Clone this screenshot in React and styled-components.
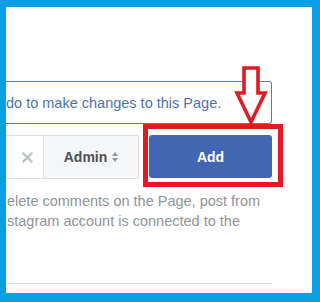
import React from "react";
import styled, { createGlobalStyle } from "styled-components";

const GlobalStyle = createGlobalStyle`
  html, body {
    margin: 0;
    padding: 0;
  }
  body {
    font-family: "Liberation Sans", Arial, sans-serif;
  }
`;

const App = () => {
  return (
    <Frame>
      <GlobalStyle />
      <Panel>
        <Content>
          <NoteBox>
            <NoteText>do to make changes to this Page.</NoteText>
          </NoteBox>

          <ControlRow>
            <ClearBox>
              <svg width="11" height="11" viewBox="0 0 11 11">
                <path
                  d="M1.5 1.5 L9.5 9.5 M9.5 1.5 L1.5 9.5"
                  stroke="#bec3c9"
                  strokeWidth="2.4"
                  strokeLinecap="square"
                />
              </svg>
            </ClearBox>
            <RoleSelect>
              Admin
              <svg width="6" height="10" viewBox="0 0 6 10">
                <path d="M3 0 L6 4 L0 4 Z M0 6 L6 6 L3 10 Z" fill="#90949c" />
              </svg>
            </RoleSelect>
            <AddButton>Add</AddButton>
          </ControlRow>

          <HelpText>
            <Line>elete comments on the Page, post from</Line>
            <Line>stagram account is connected to the</Line>
          </HelpText>

          <Divider />
        </Content>

        <Highlight />
        <Arrow width="36" height="62" viewBox="0 0 36 62">
          <polygon
            points="10,4 24,4 24,29 31,29 17,58 3,29 10,29"
            fill="#fff"
            stroke="#e01b24"
            strokeWidth="3.6"
          />
        </Arrow>
      </Panel>
    </Frame>
  );
};

export default App;

const Frame = styled.div`
  width: 320px;
  height: 302px;
  box-sizing: border-box;
  padding: 7px 8px 9px 6px;
  background: #0a9fe2;
`;

const Panel = styled.div`
  position: relative;
  height: 100%;
  background: #fff;
  overflow: hidden;
`;

const Content = styled.div`
  display: flex;
  flex-direction: column;
  padding: 74px 40px 0 0;
`;

const NoteBox = styled.div`
  height: 43px;
  box-sizing: border-box;
  display: flex;
  align-items: center;
  border: 1px solid #5a7db5;
  border-left: none;
  border-radius: 0 3px 3px 0;
  overflow: hidden;
`;

const NoteText = styled.span`
  font-size: 14.5px;
  color: #4e72b3;
  white-space: nowrap;
`;

const ControlRow = styled.div`
  display: flex;
  gap: 10px;
  height: 44px;
  margin-top: 11px;
`;

const ClearBox = styled.div`
  width: 37px;
  box-sizing: border-box;
  display: flex;
  align-items: center;
  justify-content: center;
  padding-left: 6px;
  border-top: 1px solid #dddfe2;
  border-bottom: 1px solid #dddfe2;
  background: #fff;
  margin-right: -10px;
`;

const RoleSelect = styled.div`
  width: 96px;
  box-sizing: border-box;
  display: flex;
  align-items: center;
  justify-content: center;
  gap: 5px;
  border: 1px solid #dddfe2;
  border-radius: 0 2px 2px 0;
  background: #f5f6f7;
  font-size: 14px;
  font-weight: bold;
  color: #4b4f56;
`;

const AddButton = styled.button`
  flex: 1;
  height: 43px;
  border: none;
  border-radius: 3px;
  background: #4267b2;
  color: #fff;
  font-family: "Liberation Sans", Arial, sans-serif;
  font-size: 14px;
  font-weight: bold;
  padding: 0;
`;

const HelpText = styled.div`
  margin-top: 12px;
  font-size: 14.5px;
  line-height: 20px;
  color: #90949c;
`;

const Line = styled.div`
  white-space: nowrap;
  padding-left: 1px;
`;

const Divider = styled.div`
  margin-top: 52px;
  height: 1px;
  background: #dddfe2;
`;

const Highlight = styled.div`
  position: absolute;
  left: 137px;
  top: 117px;
  width: 140px;
  height: 63px;
  box-sizing: border-box;
  border: 5px solid #e01b24;
`;

const Arrow = styled.svg`
  position: absolute;
  left: 228px;
  top: 57px;
`;
